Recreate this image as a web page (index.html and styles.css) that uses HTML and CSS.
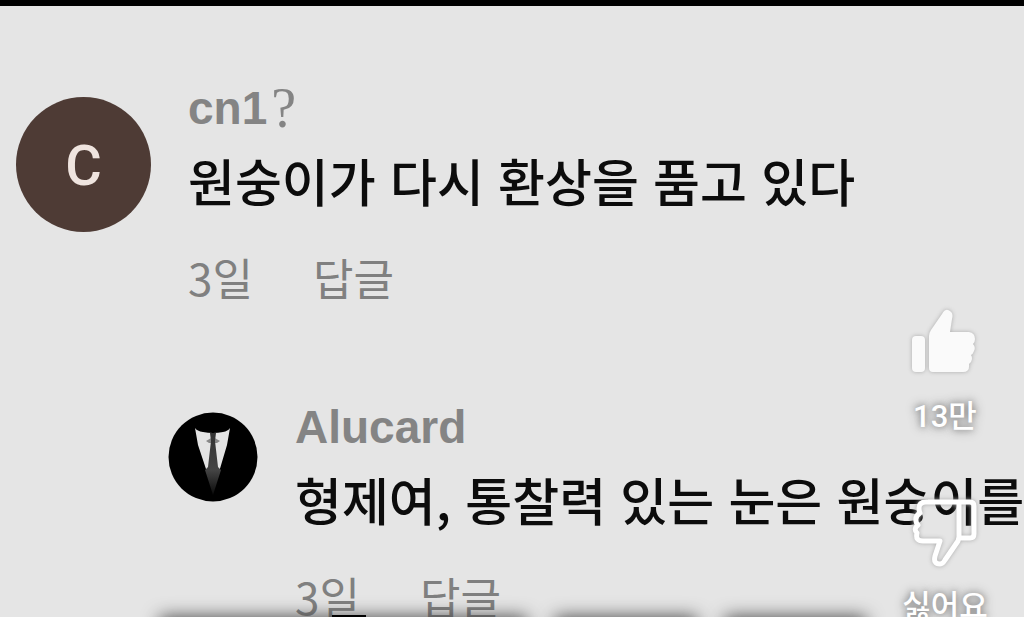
FILE: index.html
```html
<!DOCTYPE html>
<html lang="ko">
<head>
    <meta charset="UTF-8">
    <meta name="viewport" content="width=device-width, initial-scale=1.0">
    <title>댓글</title>
    <link rel="stylesheet" href="styles.css">
</head>
<body>
    <main class="comments">
        <article class="comment">
            <div class="avatar">C</div>
            <div class="content">
                <h2 class="name">cn1<span class="mark">?</span></h2>
                <p class="text">원숭이가 다시 환상을 품고 있다</p>
                <div class="meta">
                    <span>3일</span>
                    <button class="reply-button">답글</button>
                </div>
            </div>
        </article>
        <article class="comment reply">
            <svg class="avatar-small" viewBox="0 0 90 90" aria-hidden="true">
                <defs>
                    <linearGradient id="tie" x1="0" y1="0" x2="0" y2="1">
                        <stop offset="0" stop-color="#333"/>
                        <stop offset="0.6" stop-color="#444"/>
                        <stop offset="1" stop-color="#0a0a0a"/>
                    </linearGradient>
                </defs>
                <circle cx="45" cy="45" r="44.500"/>
                <path d="M27 16Q29 19 35 20Q45 22 55 20Q60 19 62 16L59 33L51 60H39L30 33Z" fill="#e4e4e4"/>
                <path d="M38 29L45 25L52 29L49 31L41 31Z" fill="#888"/>
                <path d="M42 21H48L47 29L50 55L53 58L45 83L37 58L40 55L43 29Z" fill="url(#tie)"/>
            </svg>
            <div class="content">
                <h2 class="name">Alucard</h2>
                <p class="text">형제여, 통찰력 있는 눈은 원숭이를</p>
                <div class="meta">
                    <span>3일</span>
                    <button class="reply-button">답글</button>
                </div>
            </div>
        </article>
    </main>

    <aside class="actions">
        <button class="action">
            <svg viewBox="0 0 72 72" aria-hidden="true">
                <rect x="3" y="28" width="13" height="36" rx="4" fill="#fafafa"/>
                <path d="M20 28Q20 25 22 22L33 6Q36 1 39 2Q45 4 43 11L41 24H60Q66 25 66 31Q66 34 64 36Q67 39 65 43Q64 46 62 47Q64 50 62 54Q61 55 60 56Q61 64 54 64H24Q20 64 20 60Z" fill="#fafafa"/>
            </svg>
            <span>13만</span>
        </button>
        <button class="action">
            <svg viewBox="0 0 72 72" aria-hidden="true">
                <path d="M50 4H17Q10 4 10 10Q10 13 11 15Q6 18 7 23Q7 25 9 27Q4 31 8 35Q6 43 14 43H31L26 58Q24 66 31 66Q34 66 36 62L49 43L50 39ZM50 4H61Q65 4 65 8V36Q65 40 61 40H50" fill="none" stroke="#fff" stroke-width="5" stroke-linejoin="round"/>
            </svg>
            <span>싫어요</span>
        </button>
    </aside>

    <div class="bottom-shadow">
        <i class="shade wide"></i>
        <i class="shade"></i>
        <i class="shade"></i>
    </div>
    <i class="notch"></i>
</body>
</html>
```
FILE: styles.css
```css
* {
    box-sizing: border-box;
}
body {
    position: relative;
    height: 100vh;
    margin: 0;
    border-top: 6px solid #000;
    background-color: #e5e5e5;
    font-family: "Liberation Sans", "Noto Sans CJK KR", sans-serif;
    overflow: hidden;
}
button {
    padding: 0;
    border: none;
    background: none;
    font: inherit;
    color: inherit;
    cursor: pointer;
}
.comments {
    padding: 74px 0 0 16px;
}
.comment {
    display: flex;
    gap: 37px;
    margin-bottom: 98px;
}
.reply {
    padding-left: 152px;
}
.avatar {
    flex: none;
    width: 135px;
    height: 135px;
    margin-top: 17px;
    border-radius: 50%;
    background-color: #4e3b35;
    color: #efe4df;
    font-family: Roboto, sans-serif;
    font-size: 56px;
    font-weight: 500;
    line-height: 138px;
    text-align: center;
}
.avatar-small {
    flex: none;
    width: 90px;
    height: 90px;
    margin-top: 13px;
}
.content {
    white-space: nowrap;
}
.name {
    height: 56px;
    margin: 0;
    color: #848484;
    font-size: 46px;
    font-weight: bold;
    line-height: 56px;
}
.mark {
    margin-left: 4px;
    font-family: "Liberation Serif", serif;
    font-size: 56px;
    font-weight: normal;
    line-height: 40px;
    vertical-align: -3px;
}
.text {
    margin: 12px 0 41px;
    color: #0c0c0c;
    font-family: "Noto Sans CJK KR", sans-serif;
    font-size: 51px;
    font-weight: 500;
    line-height: 64px;
}
.meta {
    display: flex;
    gap: 60px;
    color: #808080;
    font-family: "Noto Sans CJK KR", sans-serif;
    font-size: 44px;
    line-height: 48px;
}
.actions {
    position: absolute;
    top: 302px;
    right: 32px;
    width: 94px;
    display: flex;
    flex-direction: column;
    gap: 57px;
}
.action {
    display: flex;
    flex-direction: column;
    align-items: center;
    gap: 13px;
    color: #fff;
    font-family: Roboto, "Noto Sans CJK KR", sans-serif;
    font-size: 31px;
    font-weight: 500;
    line-height: 48px;
    white-space: nowrap;
    text-shadow: 0 0 6px #888, 0 0 12px #888;
}
.action svg {
    width: 72px;
    height: 72px;
    filter: drop-shadow(0 0 2px #aaa);
}
.bottom-shadow {
    position: absolute;
    bottom: -20px;
    left: 160px;
    right: 158px;
    display: flex;
    gap: 28px;
}
.shade {
    flex: 1;
    height: 20px;
    box-shadow: 0 0 18px 0 #444;
}
.wide {
    flex: 2.6;
}
.notch {
    position: absolute;
    left: 332px;
    bottom: 0;
    width: 34px;
    height: 2px;
    background-color: #000;
}
```
